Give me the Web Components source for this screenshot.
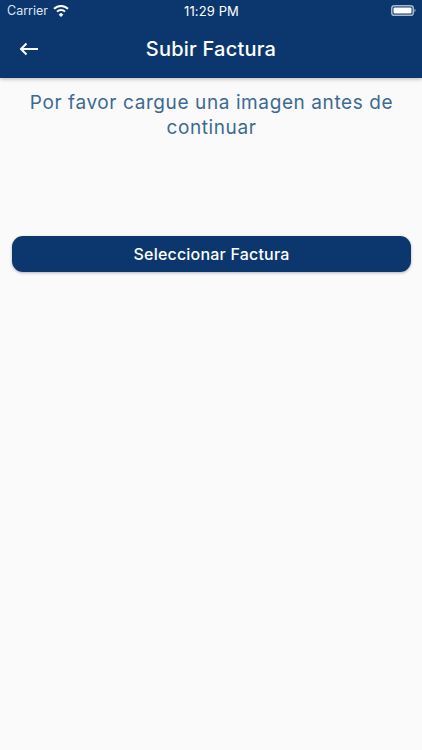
<!DOCTYPE html>
<html lang="es">
<head>
<meta charset="utf-8">
<title>Subir Factura</title>
<style>
  html, body { margin: 0; height: 100%; background: #fafafa; }
  body { font-family: Inter, "Liberation Sans", sans-serif; overflow: hidden; }
</style>
</head>
<body>
<app-header>
  <status-bar slot="status" carrier="Carrier" time="11:29 PM"></status-bar>
  Subir Factura
</app-header>
<upload-page>
  <span slot="message">Por favor cargue una imagen antes de continuar</span>
  <primary-button>Seleccionar Factura</primary-button>
</upload-page>

<script>
class StatusBar extends HTMLElement {
  constructor() {
    super();
    this.shadowDOM = this.attachShadow({ mode: 'open' });
  }

  connectedCallback() {
    this.shadowDOM.innerHTML = `
      <style>
      :host {
        display: grid;
        grid-template-columns: 1fr auto 1fr;
        align-items: center;
        height: 21px;
        padding: 0 6px 0 7px;
        color: #fff;
        font-size: 13px;
      }
      .left { display: flex; align-items: center; gap: 5px; color: #dfe6ef; font-size: 12.5px; }
      .time { font-weight: 400; letter-spacing: .1px; }
      .right { display: flex; justify-content: flex-end; }
      svg { display: block; }
      </style>
      <div class="left">
        <span>${this.getAttribute('carrier')}</span>
        <svg width="16" height="12" viewBox="0 0 16 12">
          <path d="M8 7.700 10.300 9.700 8 12 5.700 9.700Z" fill="#fff"/>
          <path d="M4 6.600a5.800 5.800 0 0 1 8 0" fill="none" stroke="#fff" stroke-width="2"/>
          <path d="M1 3.700a10.200 10.200 0 0 1 14 0" fill="none" stroke="#fff" stroke-width="2"/>
        </svg>
      </div>
      <span class="time">${this.getAttribute('time')}</span>
      <div class="right">
        <svg width="25" height="11" viewBox="0 0 25 11">
          <rect x=".75" y=".75" width="21.500" height="9.500" rx="2.600" fill="none" stroke="#a9b8cc" stroke-width="1.500"/>
          <rect x="2.500" y="2.500" width="18" height="6" rx="1" fill="#fff"/>
          <path d="M23.500 3.800c.7.2 1 .8 1 1.700s-.3 1.500-1 1.700Z" fill="#a9b8cc"/>
        </svg>
      </div>
    `;
  }
}

class AppHeader extends HTMLElement {
  constructor() {
    super();
    this.shadowDOM = this.attachShadow({ mode: 'open' });
    this.shadowDOM.innerHTML = `
      <style>
      :host {
        display: block;
        background: #0b376e;
        color: #fff;
        box-shadow: 0 1px 4px rgba(0, 0, 0, .28);
      }
      .bar {
        display: grid;
        grid-template-columns: 58px 1fr 58px;
        align-items: center;
        height: 57px;
      }
      .back {
        display: block;
        margin: -1px 0 0 19px;
      }
      .title {
        text-align: center;
        font-size: 20px;
        font-weight: 500;
        letter-spacing: .22px;
        margin-top: -1px;
      }
      </style>
      <slot name="status"></slot>
      <div class="bar">
        <svg class="back" width="20" height="14" viewBox="0 0 20 14">
          <path d="M19 7H2M7.500 1.500 2 7l5.500 5.500" fill="none" stroke="#fff" stroke-width="2"/>
        </svg>
        <div class="title"><slot></slot></div>
        <span></span>
      </div>
    `;
  }
}

class UploadPage extends HTMLElement {
  constructor() {
    super();
    this.shadowDOM = this.attachShadow({ mode: 'open' });
    this.shadowDOM.innerHTML = `
      <style>
      :host {
        display: block;
        padding: 12px 11px 0 12px;
      }
      .message {
        margin: 0 6px 96px;
        text-align: center;
        color: #3b6a93;
        font-size: 19px;
        line-height: 25px;
        letter-spacing: .6px;
      }
      </style>
      <p class="message"><slot name="message"></slot></p>
      <slot></slot>
    `;
  }
}

class PrimaryButton extends HTMLElement {
  constructor() {
    super();
    this.shadowDOM = this.attachShadow({ mode: 'open' });
    this.shadowDOM.innerHTML = `
      <style>
      :host {
        display: flex;
        align-items: center;
        justify-content: center;
        height: 36px;
        border-radius: 11px;
        background: #0b376e;
        color: #fff;
        font-size: 16px;
        font-weight: 500;
        letter-spacing: .2px;
        box-shadow: 0 1px 3px rgba(0, 0, 0, .3);
      }
      </style>
      <slot></slot>
    `;
  }
}

customElements.define('status-bar', StatusBar);
customElements.define('app-header', AppHeader);
customElements.define('upload-page', UploadPage);
customElements.define('primary-button', PrimaryButton);
</script>
</body>
</html>
